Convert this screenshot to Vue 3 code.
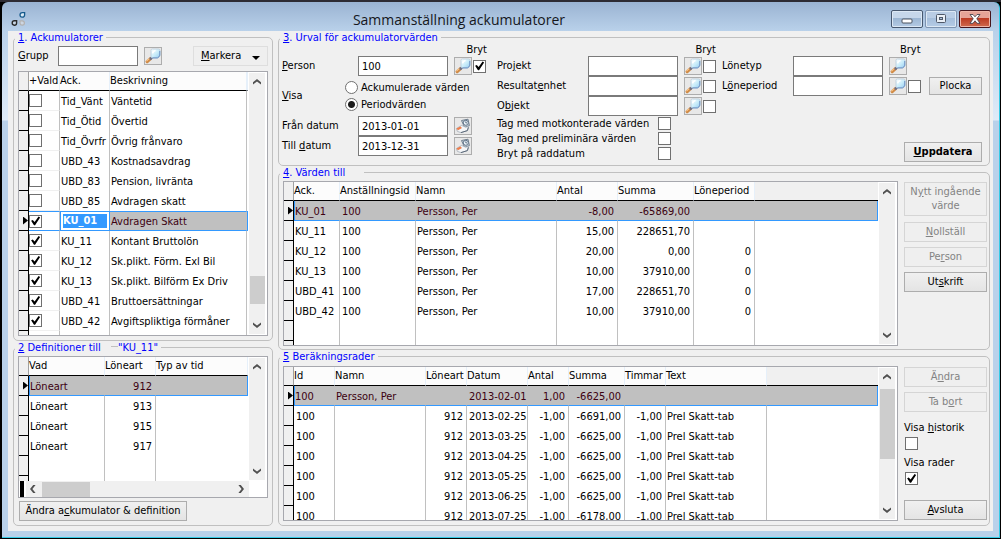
<script setup>
import { ref, reactive } from 'vue'

const accumulators = reactive([
  { on: false, ack: 'Tid_Vänt', text: 'Väntetid' },
  { on: false, ack: 'Tid_Ötid', text: 'Övertid' },
  { on: false, ack: 'Tid_Övrfr', text: 'Övrig frånvaro' },
  { on: false, ack: 'UBD_43', text: 'Kostnadsavdrag' },
  { on: false, ack: 'UBD_83', text: 'Pension, livränta' },
  { on: false, ack: 'UBD_85', text: 'Avdragen skatt' },
  { on: true, ack: 'KU_01', text: 'Avdragen Skatt', selected: true },
  { on: true, ack: 'KU_11', text: 'Kontant Bruttolön' },
  { on: true, ack: 'KU_12', text: 'Sk.plikt. Förm. Exl Bil' },
  { on: true, ack: 'KU_13', text: 'Sk.plikt. Bilförm Ex Driv' },
  { on: true, ack: 'UBD_41', text: 'Bruttoersättningar' },
  { on: true, ack: 'UBD_42', text: 'Avgiftspliktiga förmåner' },
])

const definitions = ['912', '913', '915', '917']

const valueHeads = ['Ack.', 'Anställningsid', 'Namn', 'Antal', 'Summa', 'Löneperiod']
const values = [
  ['KU_01', '100', 'Persson, Per', '-8,00', '-65869,00', ''],
  ['KU_11', '100', 'Persson, Per', '15,00', '228651,70', ''],
  ['KU_12', '100', 'Persson, Per', '20,00', '0,00', '0'],
  ['KU_13', '100', 'Persson, Per', '10,00', '37910,00', '0'],
  ['UBD_41', '100', 'Persson, Per', '17,00', '228651,70', '0'],
  ['UBD_42', '100', 'Persson, Per', '10,00', '37910,00', '0'],
]

const calcHeads = ['Id', 'Namn', 'Löneart', 'Datum', 'Antal', 'Summa', 'Timmar', 'Text']
const calcNumeric = [2, 4, 5, 6]
const calcRows = [
  ['100', 'Persson, Per', '', '2013-02-01', '1,00', '-6625,00', '', ''],
  ['100', '', '912', '2013-02-25', '-1,00', '-6691,00', '-1,00', 'Prel Skatt-tab'],
  ['100', '', '912', '2013-03-25', '-1,00', '-6625,00', '-1,00', 'Prel Skatt-tab'],
  ['100', '', '912', '2013-04-25', '-1,00', '-6625,00', '-1,00', 'Prel Skatt-tab'],
  ['100', '', '912', '2013-05-25', '-1,00', '-6625,00', '-1,00', 'Prel Skatt-tab'],
  ['100', '', '912', '2013-06-25', '-1,00', '-6625,00', '-1,00', 'Prel Skatt-tab'],
  ['100', '', '912', '2013-07-25', '-1,00', '-6178,00', '-1,00', 'Prel Skatt-tab'],
]

const person = ref('100')
const fromDate = ref('2013-01-01')
const toDate = ref('2013-12-31')
const view = ref('period')
const breakPerson = ref(true)
const showRows = ref(true)
</script>

<template>
  <svg class="defs" aria-hidden="true">
    <defs>
      <linearGradient id="lensFill" x1="0" y1="0" x2="1" y2="1">
        <stop offset="0" stop-color="#ffffff" />
        <stop offset="0.55" stop-color="#c8ecfa" />
        <stop offset="1" stop-color="#93c8ee" />
      </linearGradient>
      <symbol id="lens" viewBox="0 0 16 16">
        <path d="M2.2 13.6 L5.2 10.8" stroke="#d08a45" stroke-width="3.2" stroke-linecap="round" />
        <path d="M1.8 12.8 L4.4 10.4" stroke="#f6c48c" stroke-width="1.2" stroke-linecap="round" />
        <path d="M5 11.4 L7.6 8.8" stroke="#6d6f86" stroke-width="2.6" />
        <path d="M6 2.2 Q6 1 7.4 1 H13.4 Q15 1 15 2.6 V7 Q15 8.4 14 9 L12.4 10 H7.6 Q6 10 6 8.4 Z" fill="url(#lensFill)" stroke="#b5cadb" stroke-width="0.8" />
        <path d="M14.8 3 V7.2 Q14.6 8.8 12.4 9.9 H7.4" fill="none" stroke="#6a8fc4" stroke-width="1" />
        <path d="M7.6 5.4 Q8 3 10.6 2.6" fill="none" stroke="#fff" stroke-width="1.5" />
      </symbol>
      <symbol id="pick" viewBox="0 0 16 16">
        <path d="M6.5 2.5 L13 1.2 L14.4 7.6 L9.6 9.4 Z" fill="#cfd9e2" stroke="#72808f" stroke-width="1" />
        <circle cx="10.8" cy="4.8" r="2.5" fill="#eef5fa" stroke="#5f7388" stroke-width="1" />
        <path d="M10.8 3.4 V4.9 H12" fill="none" stroke="#3f556b" stroke-width="0.8" />
        <path d="M1.4 10.6 L6.6 7.4 L10.6 9.2 L13.6 8.6 L12.4 12.6 L6 14.6 L2.4 13.4 Z" fill="#f4f6f8" stroke="#a3acb6" stroke-width="0.8" />
        <path d="M1.4 10.4 L5.4 8.6 L7 10 L3 12.2 Z" fill="#ee7d4c" />
        <path d="M6 14.6 L12.4 12.6 L13.4 9.4" fill="none" stroke="#5c6a7a" stroke-width="1" />
      </symbol>
      <symbol id="up" viewBox="0 0 8 6">
        <path d="M0 5.6 V3.2 L4 0 L8 3.2 V5.6 L4 2.4 Z" fill="#505050" />
      </symbol>
      <symbol id="down" viewBox="0 0 8 6">
        <path d="M0 0.4 V2.8 L4 6 L8 2.8 V0.4 L4 3.6 Z" fill="#505050" />
      </symbol>
    </defs>
  </svg>

  <div class="desktop">
    <main class="window">
      <header class="titlebar">
        <svg class="logo" viewBox="0 0 16 16" aria-hidden="true">
          <path d="M13.6 2.6 V5 A2.3 2.3 0 1 1 11.3 2.6 Z" fill="#dcebf6" stroke="#165a8c" stroke-width="1.3" />
          <path d="M5.6 10.8 V13.2 A2.2 2.2 0 1 1 3.4 10.8 Z" fill="#c9d7e6" stroke="#2b2b2b" stroke-width="1.4" />
          <path d="M9 10.8 H11.3 A2.2 2.2 0 1 1 9 13.2 Z" fill="#ccd6e2" stroke="#b3b1b0" stroke-width="1.2" />
        </svg>
        <h1>Sammanställning ackumulatorer</h1>
        <div class="caption-buttons">
          <button type="button" aria-label="Minimera">
            <svg viewBox="0 0 12 10"><rect x="1" y="5" width="10" height="4" rx="1" fill="#fff" stroke="#4c5461" /></svg>
          </button>
          <button type="button" class="dim" aria-label="Maximera">
            <svg viewBox="0 0 12 10"><rect x="1.5" y="0.5" width="9" height="8" rx="1" fill="#e9eff6" stroke="#4e5868" /><rect x="4.5" y="3.5" width="3" height="2" fill="#a9c0da" stroke="#4e5868" /></svg>
          </button>
          <button type="button" class="close" aria-label="Stäng">
            <svg viewBox="0 0 12 10"><path d="M1 0.5 H4 L6 2.8 L8 0.5 H11 L7.8 4.8 L11 9.3 H8 L6 6.8 L4 9.3 H1 L4.2 4.8 Z" fill="#fff" stroke="#4a4550" stroke-width="0.9" /></svg>
          </button>
        </div>
      </header>

      <div class="client">
        <div class="left">
          <fieldset>
            <legend><u>1</u>. Ackumulatorer</legend>
            <div class="body stack">
              <div class="grupp">
                <label for="grupp"><u>G</u>rupp</label>
                <input id="grupp" type="text" class="box">
                <button type="button" class="icon" aria-label="Sök grupp"><svg><use href="#lens" /></svg></button>
                <button type="button" class="btn markera"><span><u>M</u>arkera</span><svg viewBox="0 0 8 4"><path d="M0 0 H8 L4 4 Z" /></svg></button>
              </div>
              <div class="grid">
                <div class="sheet">
                  <table>
                    <colgroup><col class="w10"><col class="w31"><col class="w50"><col class="w137"><col></colgroup>
                    <thead><tr><th class="gut"></th><th>+Vald</th><th>Ack.</th><th>Beskrivning</th><th></th></tr></thead>
                    <tbody>
                      <tr v-for="row in accumulators" :key="row.ack" :class="{ sel: row.selected, framed: row.selected }">
                        <td class="gut"></td>
                        <td class="tick"><input v-model="row.on" type="checkbox" :aria-label="row.ack"></td>
                        <td :class="{ edit: row.selected }"><span>{{ row.ack }}</span></td>
                        <td>{{ row.text }}</td>
                        <td></td>
                      </tr>
                      <tr><td class="gut"></td><td></td><td></td><td></td><td></td></tr>
                    </tbody>
                  </table>
                </div>
                <div class="vbar">
                  <svg><use href="#up" /></svg>
                  <div class="track"><span class="before-low"></span><span class="thumb t28"></span><span class="after-low"></span></div>
                  <svg><use href="#down" /></svg>
                </div>
              </div>
            </div>
          </fieldset>

          <fieldset>
            <legend><u>2</u> Definitioner till <i class="rule"></i>"KU_11"</legend>
            <div class="body stack">
              <div class="grid columns">
                <div class="upper">
                  <div class="sheet">
                    <table>
                      <colgroup><col class="w10"><col class="w76"><col class="w51"><col></colgroup>
                      <thead><tr><th class="gut"></th><th>Vad</th><th>Löneart</th><th>Typ av tid</th></tr></thead>
                      <tbody>
                        <tr v-for="(code, i) in definitions" :key="code" :class="{ sel: i === 0 }">
                          <td class="gut"></td><td>Löneart</td><td class="num">{{ code }}</td><td></td>
                        </tr>
                        <tr v-for="n in 2" :key="n"><td class="gut"></td><td></td><td></td><td></td></tr>
                      </tbody>
                    </table>
                  </div>
                  <div class="vbar">
                    <svg><use href="#up" /></svg>
                    <div class="track"></div>
                    <svg><use href="#down" /></svg>
                  </div>
                </div>
                <div class="hrow">
                  <span class="split"></span>
                  <div class="hbar">
                    <svg viewBox="0 0 6 8"><path d="M5.6 0 H3.2 L0 4 L3.2 8 H5.6 L2.4 4 Z" fill="#505050" /></svg>
                    <span class="hthumb"></span>
                    <svg viewBox="0 0 6 8"><path d="M0.4 0 H2.8 L6 4 L2.8 8 H0.4 L3.6 4 Z" fill="#505050" /></svg>
                  </div>
                </div>
              </div>
              <button type="button" class="btn define"><span>Ändra a<u>c</u>kumulator &amp; definition</span></button>
            </div>
          </fieldset>
        </div>

        <div class="right">
          <fieldset>
            <legend><u>3</u>. Urval för ackumulatorvärden</legend>
            <div class="body filters">
              <div class="group-a">
                <div class="cap"><span>Bryt</span></div>
                <div class="line">
                  <label for="person"><u>P</u>erson</label>
                  <input id="person" v-model="person" type="text" class="box">
                  <button type="button" class="icon" aria-label="Sök person"><svg><use href="#lens" /></svg></button>
                  <input v-model="breakPerson" type="checkbox" aria-label="Bryt person">
                </div>
                <div class="choice" role="radiogroup" aria-labelledby="visa">
                  <span id="visa"><u>V</u>isa</span>
                  <div>
                    <label><input v-model="view" type="radio" value="ack">Ackumulerade värden</label>
                    <label><input v-model="view" type="radio" value="period">Periodvärden</label>
                  </div>
                </div>
                <div class="line">
                  <label for="from">Från datum</label>
                  <input id="from" v-model="fromDate" type="text" class="box">
                  <button type="button" class="icon" aria-label="Välj från datum"><svg><use href="#pick" /></svg></button>
                </div>
                <div class="line">
                  <label for="to">Till <u>d</u>atum</label>
                  <input id="to" v-model="toDate" type="text" class="box">
                  <button type="button" class="icon" aria-label="Välj till datum"><svg><use href="#pick" /></svg></button>
                </div>
              </div>

              <div class="group-b">
                <div class="cap"><span>Bryt</span></div>
                <div class="line">
                  <label for="projekt">Pro<u>j</u>ekt</label>
                  <input id="projekt" type="text" class="box">
                  <button type="button" class="icon" aria-label="Sök projekt"><svg><use href="#lens" /></svg></button>
                  <input type="checkbox" aria-label="Bryt projekt">
                </div>
                <div class="line">
                  <label for="enhet">Resultat<u>e</u>nhet</label>
                  <input id="enhet" type="text" class="box">
                  <button type="button" class="icon" aria-label="Sök resultatenhet"><svg><use href="#lens" /></svg></button>
                  <input type="checkbox" aria-label="Bryt resultatenhet">
                </div>
                <div class="line">
                  <label for="objekt">O<u>b</u>jekt</label>
                  <input id="objekt" type="text" class="box">
                  <button type="button" class="icon" aria-label="Sök objekt"><svg><use href="#lens" /></svg></button>
                  <input type="checkbox" aria-label="Bryt objekt">
                </div>
                <label class="flag">Tag med motkonterade värden<input type="checkbox"></label>
                <label class="flag">Tag med preliminära värden<input type="checkbox"></label>
                <label class="flag">Bryt på raddatum<input type="checkbox"></label>
              </div>

              <div class="group-c">
                <div class="cap"><span>Bryt</span></div>
                <div class="line">
                  <label for="typ">Lönetyp</label>
                  <input id="typ" type="text" class="box">
                  <button type="button" class="icon" aria-label="Sök lönetyp"><svg><use href="#lens" /></svg></button>
                </div>
                <div class="line">
                  <label for="lperiod">L<u>ö</u>neperiod</label>
                  <input id="lperiod" type="text" class="box">
                  <button type="button" class="icon" aria-label="Sök löneperiod"><svg><use href="#lens" /></svg></button>
                  <input type="checkbox" aria-label="Bryt löneperiod">
                  <button type="button" class="btn plocka">Plocka</button>
                </div>
                <button type="button" class="btn update"><span><u>U</u>ppdatera</span></button>
              </div>
            </div>
          </fieldset>

          <fieldset>
            <legend class="wide"><u>4</u>. Värden till</legend>
            <div class="body with-side">
              <div class="grid">
                <div class="sheet">
                  <table>
                    <colgroup><col class="w10"><col class="w46"><col class="w76"><col class="w141"><col class="w61"><col class="w76"><col class="w61"><col></colgroup>
                    <thead><tr><th class="gut"></th><th v-for="h in valueHeads" :key="h">{{ h }}</th><th class="rest"></th></tr></thead>
                    <tbody>
                      <tr v-for="(row, i) in values" :key="row[0]" :class="{ sel: i === 0 }">
                        <td class="gut"></td>
                        <td v-for="(cell, c) in row" :key="c" :class="{ num: c > 2, code: c === 1 }">{{ cell }}</td>
                        <td></td>
                      </tr>
                      <tr v-for="n in 2" :key="n"><td class="gut"></td><td v-for="c in 7" :key="c"></td></tr>
                    </tbody>
                  </table>
                </div>
                <div class="vbar">
                  <svg><use href="#up" /></svg>
                  <div class="track"></div>
                  <svg><use href="#down" /></svg>
                </div>
              </div>
              <div class="side">
                <button type="button" class="btn tall" disabled><span>N<u>y</u>tt ingående värde</span></button>
                <button type="button" class="btn" disabled><span><u>N</u>ollställ</span></button>
                <button type="button" class="btn" disabled><span>Pe<u>r</u>son</span></button>
                <button type="button" class="btn"><span>Ut<u>s</u>krift</span></button>
              </div>
            </div>
          </fieldset>

          <fieldset>
            <legend><u>5</u> Beräkningsrader</legend>
            <div class="body with-side low">
              <div class="grid">
                <div class="sheet">
                  <table>
                    <colgroup><col class="w10"><col class="w41"><col class="w91"><col class="w41"><col class="w61"><col class="w41"><col class="w56"><col class="w41"><col class="w101"><col></colgroup>
                    <thead><tr><th class="gut"></th><th v-for="h in calcHeads" :key="h">{{ h }}</th><th class="rest"></th></tr></thead>
                    <tbody>
                      <tr v-for="(row, i) in calcRows" :key="row[3]" :class="{ sel: i === 0 }">
                        <td class="gut"></td>
                        <td v-for="(cell, c) in row" :key="c" :class="{ num: calcNumeric.includes(c), code: c === 0 || c === 3 }">{{ cell }}</td>
                        <td></td>
                      </tr>
                    </tbody>
                  </table>
                </div>
                <div class="vbar">
                  <svg><use href="#up" /></svg>
                  <div class="track"><span class="thumb t70"></span></div>
                  <svg><use href="#down" /></svg>
                </div>
              </div>
              <div class="side">
                <button type="button" class="btn" disabled><span>Ä<u>n</u>dra</span></button>
                <button type="button" class="btn" disabled><span>Ta b<u>o</u>rt</span></button>
                <label class="toggle"><span>Visa <u>h</u>istorik</span><input type="checkbox"></label>
                <label class="toggle"><span>Visa rader</span><input v-model="showRows" type="checkbox"></label>
                <button type="button" class="btn last"><span><u>A</u>vsluta</span></button>
              </div>
            </div>
          </fieldset>
        </div>
      </div>
    </main>
  </div>
</template>

<style>
body {
  margin: 0;
  background: #000;
}
</style>

<style scoped>
* {
  box-sizing: border-box;
}
.defs {
  position: absolute;
  width: 0;
  height: 0;
}
.desktop {
  height: 100vh;
  min-height: 500px;
  padding: 2px 1px 1px 2px;
  background: linear-gradient(#2d2b33 2px, #000 2px);
  font-family: "DejaVu Sans Condensed", "DejaVu Sans", Tahoma, sans-serif;
  font-size: 11px;
  line-height: 14px;
  color: #000;
}
.window {
  display: flex;
  flex-direction: column;
  height: 100%;
  padding: 0 6px 6px 6px;
  border-right: 1px solid #35cbe6;
  border-bottom: 1px solid #35cbe6;
  border-radius: 6px 6px 0 0;
  background: linear-gradient(#9ab3d2 0, #b9d1ea 29px, #dfebf8 118px, #b9d1ea 119px);
}
.titlebar {
  display: flex;
  flex: none;
  height: 29px;
  padding: 8px 2px 0 3px;
}
.logo {
  width: 16px;
  height: 16px;
}
h1 {
  flex: 1;
  margin: 0;
  font: 400 14px/19px "Open Sans", "Noto Sans", sans-serif;
  text-align: center;
  color: #15171c;
}
.caption-buttons {
  display: flex;
  gap: 2px;
}
.caption-buttons button {
  display: flex;
  align-items: center;
  justify-content: center;
  width: 32px;
  height: 18px;
  padding: 0;
  border: 1px solid #47586f;
  border-radius: 2px;
  background: linear-gradient(#c6d7ea 45%, #9cb6d3 46%, #b4cbe4);
  box-shadow: inset 0 0 0 1px #dce8f4;
}
.caption-buttons .dim {
  border-color: #7d93b0;
  background: linear-gradient(#b9cde5 45%, #a5bedb 46%, #b5cce6);
}
.caption-buttons .close {
  border-color: #46141b;
  background: linear-gradient(#e6a397 45%, #bc3a22 46%, #cf6a4e);
  box-shadow: inset 0 0 0 1px #eeb5a8;
}
.caption-buttons svg {
  width: 12px;
  height: 10px;
}
.client {
  display: flex;
  flex: 1;
  gap: 5px;
  min-height: 0;
  padding: 0 3px 5px 5px;
  background: #f0f0f0;
}
.left {
  display: grid;
  flex: none;
  grid-template-rows: 310fr 185fr;
  width: 260px;
}
.right {
  display: grid;
  flex: 1;
  grid-template-rows: auto 184fr 176fr;
  min-width: 0;
}
fieldset {
  display: flex;
  flex-direction: column;
  min-width: 0;
  min-height: 0;
  margin: 0;
  padding: 0;
  border: 1px solid #c0c0c0;
  border-radius: 5px;
}
legend {
  display: flex;
  height: 12px;
  margin-left: 1px;
  padding: 2px 3px 0;
  line-height: 10px;
  white-space: pre;
  color: #0000ff;
}
legend.wide {
  width: 84px;
}
.rule {
  align-self: flex-start;
  width: 7px;
  height: 4px;
  margin-left: 7px;
  border-bottom: 1px solid #c0c0c0;
}
.body {
  flex: 1;
  min-height: 0;
}
.stack {
  display: flex;
  flex-direction: column;
  gap: 3px;
  padding: 3px 4px 4px;
}
.grupp {
  display: flex;
  align-items: center;
  flex: none;
  height: 20px;
  margin-bottom: 2px;
}
.grupp label {
  width: 40px;
}
.grupp .box {
  width: 80px;
}
.box {
  height: 20px;
  padding: 0 3px;
  border: 1px solid #7a7a7a;
  border-radius: 0;
  background: #fff;
  font: inherit;
  color: #000;
  outline: 0;
}
.icon {
  flex: none;
  width: 18px;
  height: 18px;
  margin-left: 6px;
  padding: 0;
  border: 1px solid #adadad;
  background: #e8e8e8;
}
.icon svg {
  display: block;
  width: 16px;
  height: 16px;
}
.btn {
  display: flex;
  align-items: center;
  justify-content: center;
  height: 20px;
  padding: 0 4px;
  border: 1px solid #adadad;
  border-radius: 0;
  background: linear-gradient(#f0f0f0, #e4e4e4);
  font: inherit;
  color: #000;
}
.btn:disabled {
  border-color: #d5d5d5;
  background: #efefef;
  color: #838383;
}
.btn.markera {
  justify-content: space-between;
  width: 75px;
  margin-left: auto;
  padding: 0 7px;
  border-color: #dedede;
  background: #efefef;
}
.markera svg {
  width: 8px;
  height: 4px;
  margin-top: 3px;
}
input[type="checkbox"] {
  display: block;
  flex: none;
  appearance: none;
  width: 13px;
  height: 13px;
  margin: 0;
  border: 1px solid #707070;
  background: #fff;
}
input[type="checkbox"]:checked::before {
  content: "";
  display: block;
  width: 11px;
  height: 11px;
  background: #000;
  clip-path: polygon(10% 48%, 25% 40%, 42% 60%, 78% 10%, 92% 18%, 46% 88%, 36% 88%);
}
input[type="radio"] {
  appearance: none;
  width: 13px;
  height: 13px;
  margin: 0 3px 0 0;
  border: 1px solid #707070;
  border-radius: 50%;
  background: #fff;
}
input[type="radio"]:checked {
  background: radial-gradient(circle, #1c1c1c 3px, #fff 4px);
}

/* Data grids */
.grid {
  display: flex;
  flex: 1;
  min-width: 0;
  min-height: 0;
  border: 1px solid #a7a8ae;
  background: #fff;
}
.columns {
  flex-direction: column;
}
.upper {
  display: flex;
  flex: 1;
  min-height: 0;
}
.sheet {
  flex: 1;
  min-width: 0;
  overflow: hidden;
}
table {
  width: 100%;
  border-spacing: 0;
  table-layout: fixed;
}
.w10 { width: 10px; }
.w31 { width: 31px; }
.w41 { width: 41px; }
.w46 { width: 46px; }
.w50 { width: 50px; }
.w51 { width: 51px; }
.w56 { width: 56px; }
.w61 { width: 61px; }
.w76 { width: 76px; }
.w91 { width: 91px; }
.w101 { width: 101px; }
.w137 { width: 137px; }
.w141 { width: 141px; }
th {
  height: 19px;
  padding: 0;
  border-right: 1px solid #e6f0fa;
  border-bottom: 1px solid #000;
  background: #fcfcfc;
  font-weight: 400;
  text-align: left;
  white-space: nowrap;
}
th.rest {
  border-right: 0;
  background: #f0f0f0;
}
td {
  height: 20px;
  padding: 1px 2px 0 1px;
  overflow: hidden;
  border-right: 1px solid #c0c0c0;
  line-height: 18px;
  white-space: nowrap;
}
td:last-child {
  border-right: 0;
}
td.num {
  padding-right: 3px;
  text-align: right;
}
td.code {
  padding-right: 0;
  padding-left: 2px;
}
th.gut,
td.gut {
  padding: 0;
  border-right: 1px solid #000;
  border-bottom: 1px solid #000;
  background: #f0f0f0;
}
th.gut {
  border-right-color: #a0a0a0;
}
td.tick {
  padding: 0;
  border-bottom: 1px solid #f0f0f0;
}
tr.sel td:not(.gut) {
  border-right-color: #c0c0c0;
  border-bottom: 1px solid #3399ff;
  background: #c0c0c0;
  line-height: 17px;
  color: #3c0010;
}
tr.sel td:nth-child(2) {
  border-left: 1px solid #3399ff;
  padding-left: 0;
}
tr.sel td:not(.gut):last-child {
  border-right: 1px solid #3399ff;
}
tr.framed td:not(.gut) {
  padding-top: 0;
  border-top: 1px solid #3399ff;
}
tr.framed td.tick {
  border-left: 0;
}
tr.sel td.tick:not(.gut),
tr.sel td.edit:not(.gut) {
  background: #fff;
}
tr.sel td.edit:not(.gut) {
  padding: 2px;
  border-right-color: #3399ff;
  border-left: 1px solid #3399ff;
}
td.edit span {
  display: block;
  height: 14px;
  background: #3399ff;
  font-weight: 700;
  line-height: 14px;
  color: #fff;
}
tr.sel td.gut::after {
  content: "";
  display: block;
  width: 5px;
  height: 8px;
  margin-left: auto;
  background: #000;
  clip-path: polygon(0 0, 100% 50%, 0 100%);
}
.vbar {
  display: flex;
  flex: none;
  flex-direction: column;
  align-items: center;
  width: 16px;
  margin: 1px 2px 1px 1px;
  background: #f0f0f0;
}
.vbar svg {
  flex: none;
  width: 8px;
  height: 6px;
  margin: 6px 0;
}
.track {
  display: flex;
  flex: 1;
  flex-direction: column;
  width: 15px;
  min-height: 0;
  padding: 3px 0;
}
.thumb {
  background: #cdcdcd;
}
.t28 {
  flex: none;
  height: 28px;
}
.t70 {
  flex: none;
  height: 70px;
}
.before-low {
  flex: 188;
}
.after-low {
  flex: 9;
}
.hrow {
  display: flex;
  flex: none;
  height: 16px;
  padding: 0 18px 0 1px;
}
.split {
  width: 4px;
  margin-right: 2px;
  background: #000;
}
.hbar {
  display: flex;
  flex: 1;
  align-items: center;
  padding: 0 5px 0 4px;
  background: #f0f0f0;
}
.hbar svg {
  width: 6px;
  height: 8px;
}
.hbar svg:last-child {
  margin-left: auto;
}
.hthumb {
  width: 48px;
  height: 15px;
  margin-left: 6px;
  background: #cdcdcd;
}
.define {
  flex: none;
  align-self: flex-start;
  width: 168px;
  margin-left: 1px;
  white-space: nowrap;
}

/* Selection panel */
.filters {
  display: flex;
  padding: 0 7px 3px 3px;
}
.group-a,
.group-b {
  flex: none;
}
.group-a {
  width: 215px;
}
.group-b {
  width: 225px;
  padding-bottom: 1px;
}
.group-c {
  display: flex;
  flex: 1;
  flex-direction: column;
}
.cap {
  display: flex;
  justify-content: flex-end;
  height: 13px;
}
.group-a .cap {
  padding-right: 10px;
}
.group-b .cap {
  padding-right: 6px;
}
.group-c .cap {
  justify-content: flex-start;
  padding-left: 178px;
}
.line {
  display: flex;
  align-items: center;
  height: 20px;
}
.line label {
  width: 76px;
}
.group-b .line label {
  width: 91px;
}
.group-c .line label {
  width: 71px;
}
.line .box {
  width: 90px;
}
.line input[type="checkbox"] {
  margin-left: 1px;
}
.choice {
  display: flex;
  align-items: center;
  height: 40px;
}
.choice > span {
  width: 63px;
}
.choice label {
  display: flex;
  align-items: center;
  height: 17px;
}
.flag {
  display: flex;
  align-items: center;
  justify-content: space-between;
  width: 174px;
  height: 15px;
}
.plocka {
  flex: none;
  width: 53px;
  height: 18px;
  margin-left: auto;
}
.update {
  width: 78px;
  margin: auto 0 0 auto;
  font-weight: 700;
}

/* Grid with a button column */
.with-side {
  display: flex;
  gap: 6px;
  padding: 3px 2px 3px 4px;
}
.low {
  padding-top: 4px;
  padding-bottom: 4px;
}
.side {
  display: flex;
  flex: none;
  flex-direction: column;
  gap: 5px;
  width: 83px;
  padding: 1px 0;
}
.side .tall {
  height: 34px;
  margin-bottom: 1px;
}
.toggle {
  display: flex;
  flex-direction: column;
  gap: 2px;
  height: 30px;
  margin-top: 4px;
}
.toggle + .toggle {
  margin-top: 0;
}
.toggle span {
  white-space: nowrap;
}
.toggle input {
  margin-left: 1px;
}
.side .last {
  margin-top: auto;
}
</style>
